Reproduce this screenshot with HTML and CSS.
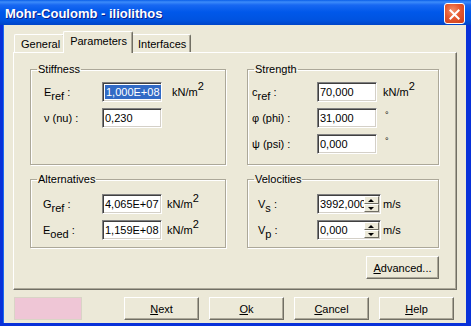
FILE: index.html
```html
<!DOCTYPE html>
<html lang="en">
<head>
  <meta charset="UTF-8">
  <title>Mohr-Coulomb - iliolithos</title>
  <link rel="stylesheet" href="styles.css">
</head>
<body>

  <div class="window">
    <div class="titlebar">
      <span class="title">Mohr-Coulomb - iliolithos</span>
      <span class="close">
        <svg width="21" height="21" viewBox="0 0 21 21">
          <path d="M6 6 L15 15 M15 6 L6 15" stroke="#fff" stroke-width="2.2" stroke-linecap="square"/>
        </svg>
      </span>
    </div>

    <div class="client">
      <div class="tabs">
        <span class="tab">General</span>
        <span class="tab is-active">Parameters</span>
        <span class="tab">Interfaces</span>
      </div>

      <div class="panel">
        <div class="groups">

          <fieldset class="group">
            <legend>Stiffness</legend>
            <div class="rows rows-stiff">
              <span class="lbl">E<sub>ref</sub> :</span>
              <span class="field"><span class="sel">1,000E+08</span></span>
              <span class="unit">kN/m<sup>2</sup></span>

              <span class="lbl">ν (nu) :</span>
              <span class="field">0,230</span>
              <span class="unit"></span>
            </div>
          </fieldset>

          <fieldset class="group">
            <legend>Strength</legend>
            <div class="rows rows-strength">
              <span class="lbl">c<sub>ref</sub> :</span>
              <span class="field">70,000</span>
              <span class="unit">kN/m<sup>2</sup></span>

              <span class="lbl">φ (phi) :</span>
              <span class="field">31,000</span>
              <span class="unit unit-deg">°</span>

              <span class="lbl">ψ (psi) :</span>
              <span class="field">0,000</span>
              <span class="unit unit-deg">°</span>
            </div>
          </fieldset>

          <fieldset class="group group-low">
            <legend>Alternatives</legend>
            <div class="rows rows-alt">
              <span class="lbl">G<sub>ref</sub> :</span>
              <span class="field">4,065E+07</span>
              <span class="unit">kN/m<sup>2</sup></span>

              <span class="lbl">E<sub>oed</sub> :</span>
              <span class="field">1,159E+08</span>
              <span class="unit">kN/m<sup>2</sup></span>
            </div>
          </fieldset>

          <fieldset class="group group-low">
            <legend>Velocities</legend>
            <div class="rows rows-vel">
              <span class="lbl">V<sub>s</sub> :</span>
              <span class="field field-spin">
                <span class="spin-text">3992,000</span>
                <span class="spin"><span class="spin-up"></span><span class="spin-down"></span></span>
              </span>
              <span class="unit">m/s</span>

              <span class="lbl">V<sub>p</sub> :</span>
              <span class="field field-spin">
                <span class="spin-text">0,000</span>
                <span class="spin"><span class="spin-up"></span><span class="spin-down"></span></span>
              </span>
              <span class="unit">m/s</span>
            </div>
          </fieldset>

        </div>

        <div class="panel-foot">
          <button class="btn btn-adv"><u>A</u>dvanced...</button>
        </div>
      </div>

      <div class="buttons">
        <span class="swatch"></span>
        <button class="btn"><u>N</u>ext</button>
        <button class="btn"><u>O</u>k</button>
        <button class="btn"><u>C</u>ancel</button>
        <button class="btn"><u>H</u>elp</button>
      </div>
    </div>
  </div>

</body>
</html>
```

FILE: styles.css
```css
body {
  margin: 0;
  font-family: "Liberation Sans", Arial, sans-serif;
  font-size: 11px;
  color: #000;
  background-color: #0831d9;
}

.window {
  width: 471px;
  height: 326px;
  background-color: #0831d9;
  display: flex;
  flex-direction: column;
}

/* title bar */
.titlebar {
  height: 25px;
  display: flex;
  align-items: center;
  justify-content: space-between;
  padding: 0 6px 0 5px;
  background-image: linear-gradient(to bottom, #0a5ee8 0, #3d8cfa 2px, #1868f2 5px, #0058ea 12px, #0053e0 20px, #0045c8 25px);
  box-sizing: border-box;
}
.title {
  color: #fff;
  font-family: "Liberation Sans", Arial, sans-serif;
  font-weight: bold;
  font-size: 13px;
  text-shadow: 1px 1px 0 #0a1e8c;
  padding-top: 1px;
}
.close {
  width: 21px;
  height: 21px;
  box-sizing: border-box;
  border: 1px solid #fff;
  border-radius: 3px;
  background-image: radial-gradient(circle at 40% 35%, #f3906a 0, #e5582f 45%, #c93e1a 100%);
  display: flex;
  margin-top: 1px;
}

/* client area */
.client {
  flex: 1;
  margin: 0 5px 3px 4px;
  background-color: #ece9d8;
  padding: 6px 9px 3px 9px;
  box-shadow: -1px 0 0 #1a6af0;
}

/* tabs */
.tabs {
  display: flex;
  height: 21px;
  align-items: flex-end;
  padding-left: 1px;
  position: relative;
  z-index: 1;
}
.tab {
  height: 18px;
  line-height: 18px;
  padding: 0 4px 0 6px;
  box-sizing: border-box;
  border-left: 1px solid #fff;
  border-top: 1px solid #fff;
  border-right: 1px solid #716f64;
  box-shadow: inset -1px 0 0 #aca899;
  border-radius: 2px 2px 0 0;
  background-color: #ece9d8;
}
.tab.is-active {
  height: 22px;
  line-height: 18px;
  margin: 0 -2px -1px -2px;
  padding: 0 5px 0 6px;
  position: relative;
  z-index: 2;
}

/* panel */
.panel {
  height: 238px;
  box-sizing: border-box;
  border-left: 1px solid #fff;
  border-top: 1px solid #fff;
  border-right: 1px solid #716f64;
  border-bottom: 1px solid #716f64;
  box-shadow: inset -1px -1px 0 #aca899;
  padding: 10px 16px 0 16px;
}

.groups {
  display: grid;
  grid-template-columns: 196px 192px;
  column-gap: 21px;
  row-gap: 8px;
}

.group {
  margin: 0;
  padding: 0;
  min-width: 0;
  border: 1px solid #aca899;
  box-shadow: 1px 1px 0 #fff, inset 1px 1px 0 #fff;
}
.group legend {
  margin-left: 6px;
  padding: 0 1px;
  line-height: 13px;
}

.rows {
  display: grid;
  grid-auto-rows: 20px;
  row-gap: 6px;
  align-items: center;
  padding-top: 6px;
  padding-bottom: 10px;
}
.group-low .rows {
  padding-top: 8px;
  padding-bottom: 7px;
}
.rows-stiff {
  grid-template-columns: 58px 60px auto;
  padding-left: 13px;
}
.rows-strength {
  grid-template-columns: 65px 60px auto;
  padding-left: 4px;
}
.rows-alt {
  grid-template-columns: 59px 60px auto;
  padding-left: 12px;
}
.rows-vel {
  grid-template-columns: 59px 64px auto;
  padding-left: 10px;
}

.lbl {
  white-space: nowrap;
}
.lbl sub {
  font-size: 11px;
  vertical-align: -4px;
  line-height: 0;
}

.field {
  height: 20px;
  box-sizing: border-box;
  background-color: #fff;
  border-top: 1px solid #808080;
  border-left: 1px solid #808080;
  border-right: 1px solid #fff;
  border-bottom: 1px solid #fff;
  box-shadow: inset 1px 1px 0 #404040, inset -1px -1px 0 #d4d0c8;
  padding: 0 2px 0 2px;
  line-height: 18px;
  white-space: nowrap;
  overflow: hidden;
}
.sel {
  background-color: #316ac5;
  color: #fff;
  display: inline-block;
  line-height: 14px;
  padding: 0 1px;
}

.unit {
  white-space: nowrap;
  padding-left: 6px;
}
.rows-stiff .unit {
  padding-left: 10px;
}
.rows-alt .unit {
  padding-left: 5px;
}
.rows-vel .unit {
  padding-left: 2px;
}
.unit sup {
  font-size: 11px;
  vertical-align: 6px;
  line-height: 0;
}
.unit-deg {
  align-self: start;
  padding-top: 2px;
  font-size: 9px;
  padding-left: 8px;
}

/* spin box */
.field-spin {
  display: flex;
  padding-right: 1px;
}
.spin-text {
  flex: 1;
  overflow: hidden;
}
.spin {
  width: 15px;
  display: flex;
  flex-direction: column;
  padding: 1px 0;
  box-sizing: border-box;
}
.spin-up,
.spin-down {
  flex: 1;
  background-color: #ece9d8;
  border-top: 1px solid #fff;
  border-left: 1px solid #fff;
  border-right: 1px solid #716f64;
  border-bottom: 1px solid #716f64;
  position: relative;
}
.spin-up::after,
.spin-down::after {
  content: "";
  position: absolute;
  left: 3px;
  top: 2px;
  border-left: 3px solid transparent;
  border-right: 3px solid transparent;
}
.spin-up::after {
  border-bottom: 3px solid #000;
}
.spin-down::after {
  border-top: 3px solid #000;
}

/* buttons */
.btn {
  font-family: "Liberation Sans", Arial, sans-serif;
  font-size: 11px;
  color: #000;
  height: 23px;
  width: 75px;
  padding: 0;
  background-color: #ece9d8;
  border-top: 1px solid #fff;
  border-left: 1px solid #fff;
  border-right: 1px solid #716f64;
  border-bottom: 1px solid #716f64;
  box-shadow: inset -1px -1px 0 #aca899;
  border-radius: 0;
}
.btn u {
  text-underline-offset: 1px;
}

.panel-foot {
  display: flex;
  justify-content: flex-end;
  padding: 8px 1px 0 0;
}
.btn-adv {
  width: 73px;
}

.buttons {
  display: flex;
  gap: 10px;
  margin-top: 7px;
  padding-left: 1px;
}
.swatch {
  width: 68px;
  height: 23px;
  box-sizing: border-box;
  background-color: #efc6d6;
  border: 1px solid #d9d4c6;
  margin-right: 32px;
}
```
